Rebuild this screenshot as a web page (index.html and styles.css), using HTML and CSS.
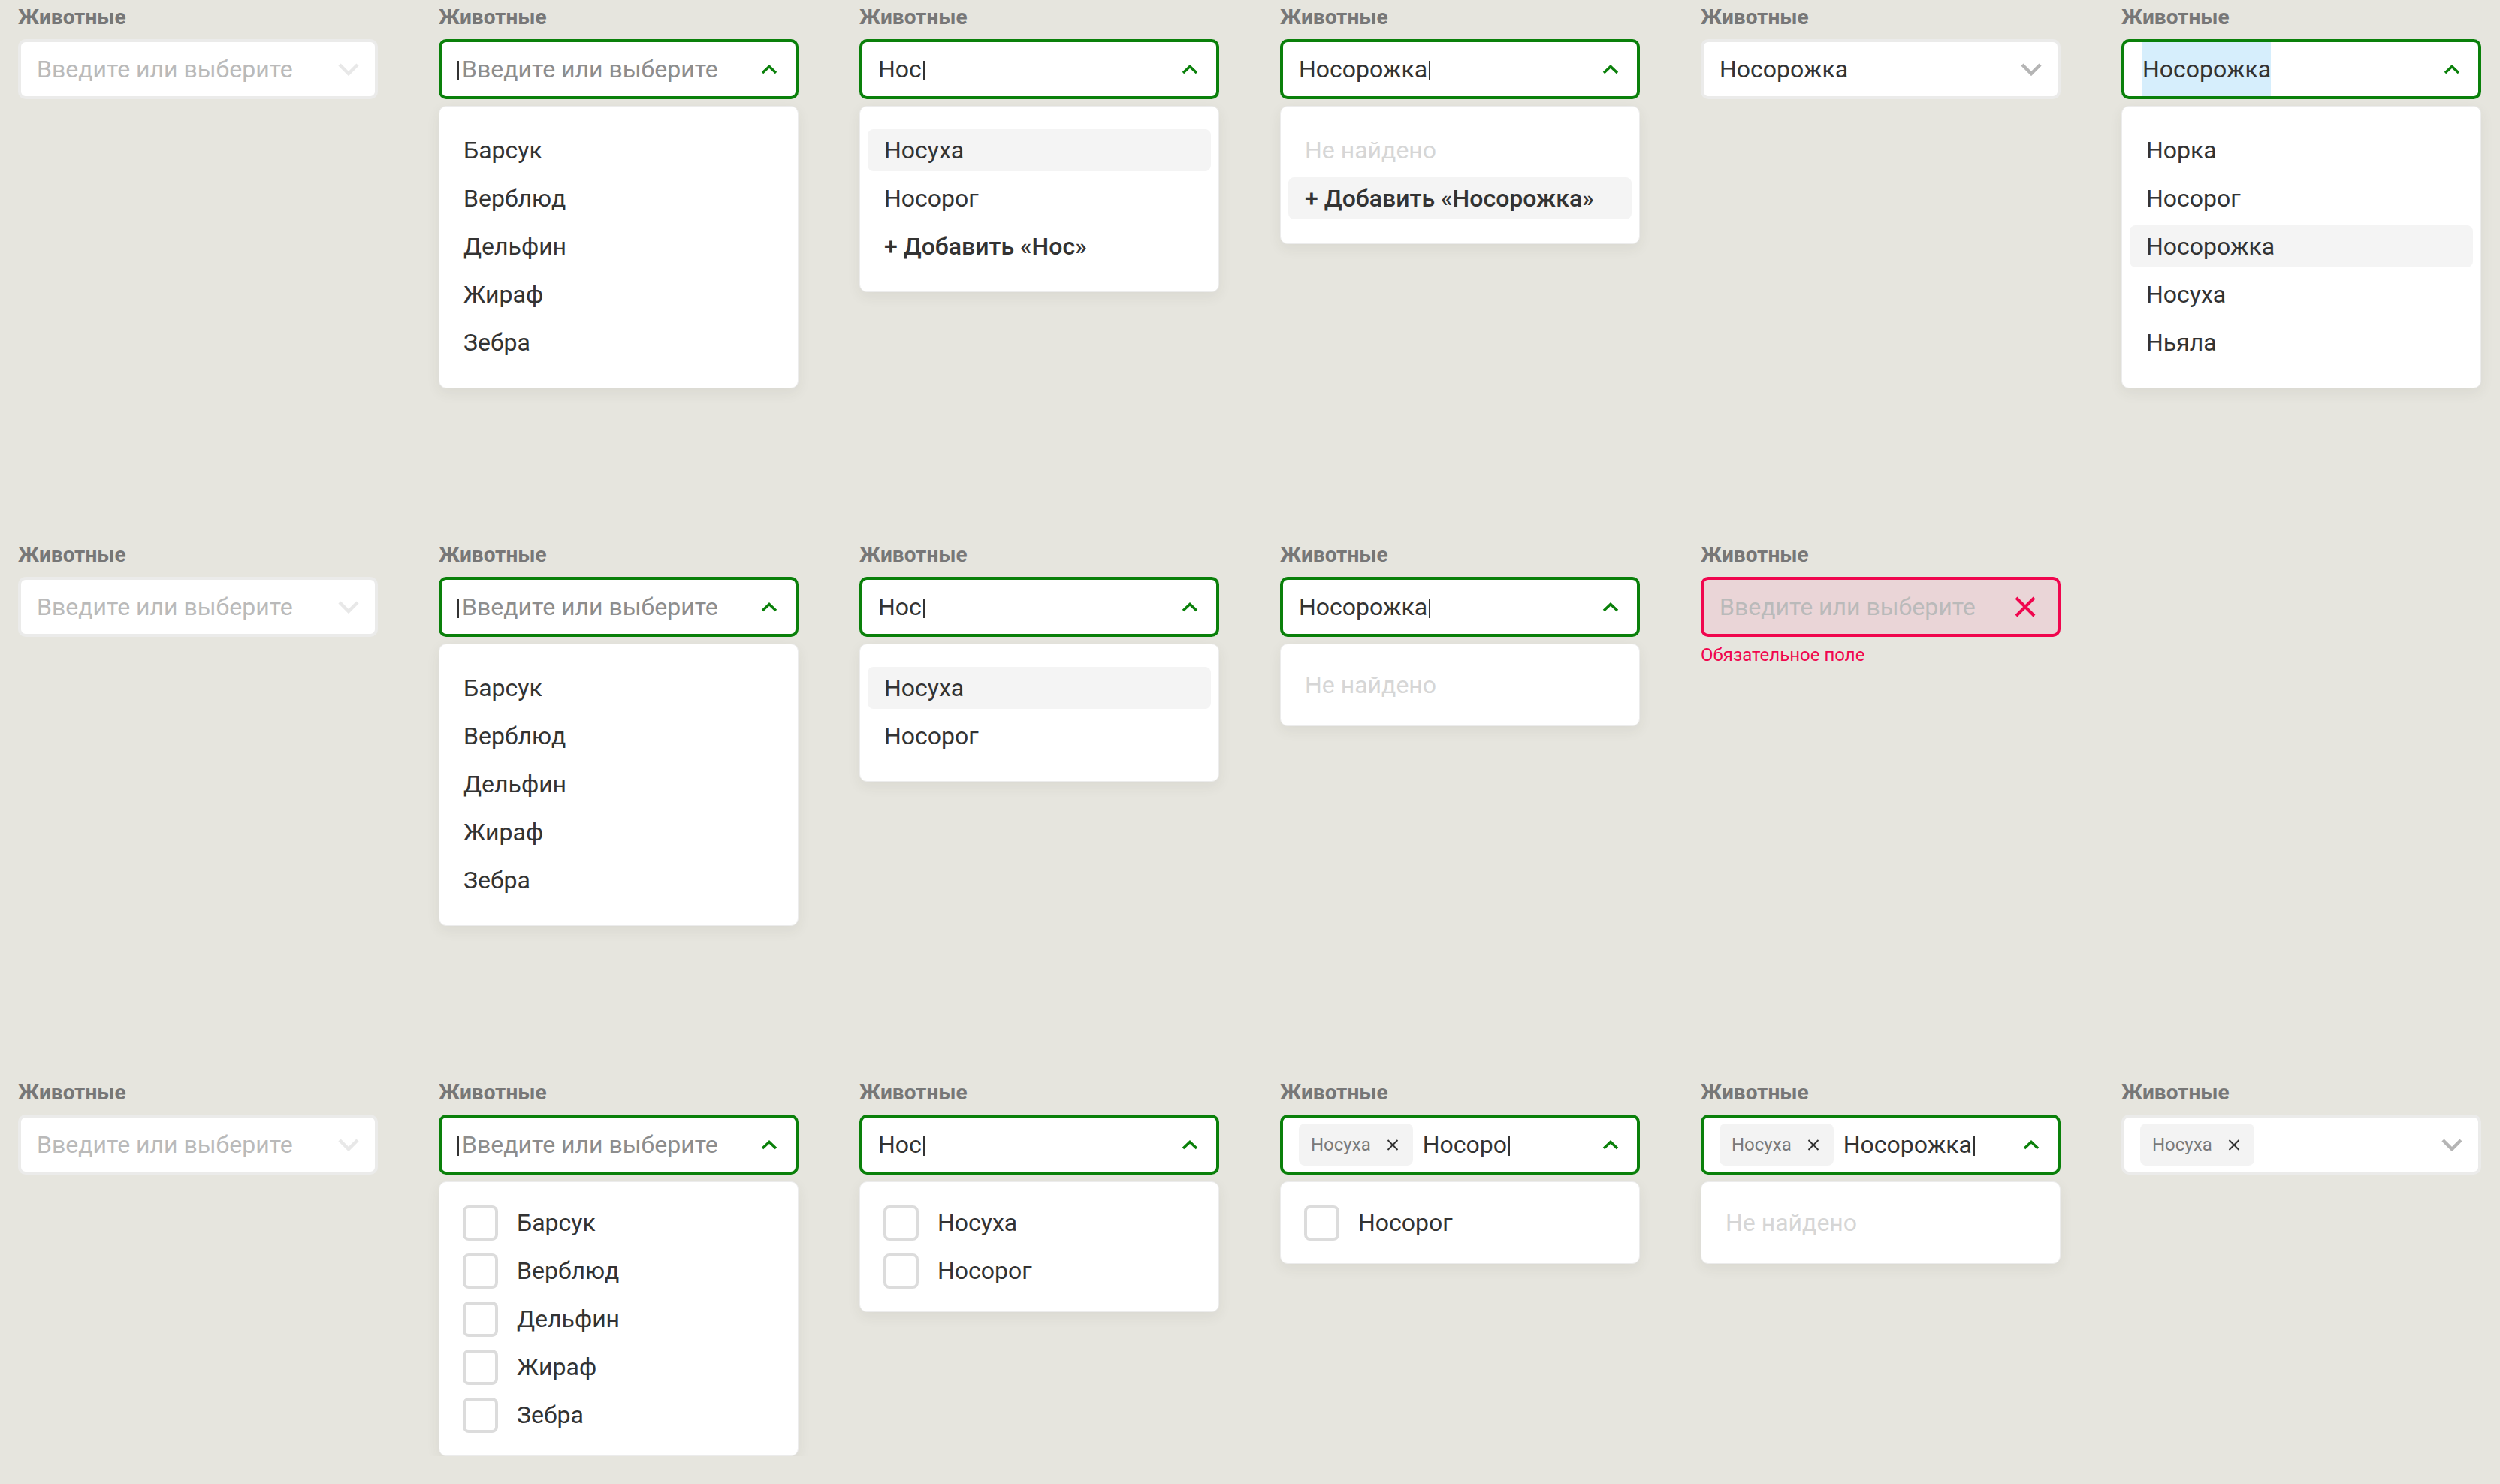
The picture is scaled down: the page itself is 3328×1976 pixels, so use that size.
FILE: index.html
```html
<!DOCTYPE HTML>
<html>
<head>
    <meta charset="utf-8">
    <title>Combobox states</title>
    <link rel="stylesheet" href="styles.css">
</head>
<body>
    <div class="board">

        <!-- single select with "add" option -->
        <div class="row">
            <div class="field">
                <div class="label">Животные</div>
                <div class="box">
                    <span class="entry placeholder">Введите или выберите</span>
                    <span class="toggle"><svg class="chev" width="28" height="17" viewBox="0 0 28 17"><path d="M2 2l12 12L26 2"/></svg></span>
                </div>
            </div>
            <div class="field">
                <div class="label">Животные</div>
                <div class="box is-open">
                    <span class="entry hint-text"><i class="caret first"></i>Введите или выберите</span>
                    <span class="toggle"><svg class="chev-up" width="22" height="13" viewBox="0 0 22 13"><path d="M2 11l9-8.5 9 8.5"/></svg></span>
                </div>
                <div class="menu">
                    <div class="opt">Барсук</div>
                    <div class="opt">Верблюд</div>
                    <div class="opt">Дельфин</div>
                    <div class="opt">Жираф</div>
                    <div class="opt">Зебра</div>
                </div>
            </div>
            <div class="field">
                <div class="label">Животные</div>
                <div class="box is-open">
                    <span class="entry">Нос<i class="caret"></i></span>
                    <span class="toggle"><svg class="chev-up" width="22" height="13" viewBox="0 0 22 13"><path d="M2 11l9-8.5 9 8.5"/></svg></span>
                </div>
                <div class="menu">
                    <div class="opt active">Носуха</div>
                    <div class="opt">Носорог</div>
                    <div class="opt add">+ Добавить «Нос»</div>
                </div>
            </div>
            <div class="field">
                <div class="label">Животные</div>
                <div class="box is-open">
                    <span class="entry">Носорожка<i class="caret"></i></span>
                    <span class="toggle"><svg class="chev-up" width="22" height="13" viewBox="0 0 22 13"><path d="M2 11l9-8.5 9 8.5"/></svg></span>
                </div>
                <div class="menu">
                    <div class="opt empty">Не найдено</div>
                    <div class="opt add active">+ Добавить «Носорожка»</div>
                </div>
            </div>
            <div class="field">
                <div class="label">Животные</div>
                <div class="box">
                    <span class="entry">Носорожка</span>
                    <span class="toggle filled"><svg class="chev" width="28" height="17" viewBox="0 0 28 17"><path d="M2 2l12 12L26 2"/></svg></span>
                </div>
            </div>
            <div class="field">
                <div class="label">Животные</div>
                <div class="box is-open">
                    <span class="selected">Носорожка</span>
                    <span class="toggle"><svg class="chev-up" width="22" height="13" viewBox="0 0 22 13"><path d="M2 11l9-8.5 9 8.5"/></svg></span>
                </div>
                <div class="menu">
                    <div class="opt">Норка</div>
                    <div class="opt">Носорог</div>
                    <div class="opt active">Носорожка</div>
                    <div class="opt">Носуха</div>
                    <div class="opt">Ньяла</div>
                </div>
            </div>
        </div>

        <!-- single select, strict list -->
        <div class="row">
            <div class="field">
                <div class="label">Животные</div>
                <div class="box">
                    <span class="entry placeholder">Введите или выберите</span>
                    <span class="toggle"><svg class="chev" width="28" height="17" viewBox="0 0 28 17"><path d="M2 2l12 12L26 2"/></svg></span>
                </div>
            </div>
            <div class="field">
                <div class="label">Животные</div>
                <div class="box is-open">
                    <span class="entry hint-text"><i class="caret first"></i>Введите или выберите</span>
                    <span class="toggle"><svg class="chev-up" width="22" height="13" viewBox="0 0 22 13"><path d="M2 11l9-8.5 9 8.5"/></svg></span>
                </div>
                <div class="menu">
                    <div class="opt">Барсук</div>
                    <div class="opt">Верблюд</div>
                    <div class="opt">Дельфин</div>
                    <div class="opt">Жираф</div>
                    <div class="opt">Зебра</div>
                </div>
            </div>
            <div class="field">
                <div class="label">Животные</div>
                <div class="box is-open">
                    <span class="entry">Нос<i class="caret"></i></span>
                    <span class="toggle"><svg class="chev-up" width="22" height="13" viewBox="0 0 22 13"><path d="M2 11l9-8.5 9 8.5"/></svg></span>
                </div>
                <div class="menu">
                    <div class="opt active">Носуха</div>
                    <div class="opt">Носорог</div>
                </div>
            </div>
            <div class="field">
                <div class="label">Животные</div>
                <div class="box is-open">
                    <span class="entry">Носорожка<i class="caret"></i></span>
                    <span class="toggle"><svg class="chev-up" width="22" height="13" viewBox="0 0 22 13"><path d="M2 11l9-8.5 9 8.5"/></svg></span>
                </div>
                <div class="menu short">
                    <div class="opt empty">Не найдено</div>
                </div>
            </div>
            <div class="field">
                <div class="label">Животные</div>
                <div class="box is-error">
                    <span class="entry placeholder">Введите или выберите</span>
                    <span class="toggle clear"><svg width="28" height="28" viewBox="0 0 28 28"><path d="M2 2l24 24M26 2L2 26"/></svg></span>
                </div>
                <div class="error">Обязательное поле</div>
            </div>
        </div>

        <!-- multi select with checkboxes -->
        <div class="row last">
            <div class="field">
                <div class="label">Животные</div>
                <div class="box">
                    <span class="entry placeholder">Введите или выберите</span>
                    <span class="toggle"><svg class="chev" width="28" height="17" viewBox="0 0 28 17"><path d="M2 2l12 12L26 2"/></svg></span>
                </div>
            </div>
            <div class="field">
                <div class="label">Животные</div>
                <div class="box is-open">
                    <span class="entry hint-text"><i class="caret first"></i>Введите или выберите</span>
                    <span class="toggle"><svg class="chev-up" width="22" height="13" viewBox="0 0 22 13"><path d="M2 11l9-8.5 9 8.5"/></svg></span>
                </div>
                <div class="menu checks">
                    <div class="opt"><span class="check"></span>Барсук</div>
                    <div class="opt"><span class="check"></span>Верблюд</div>
                    <div class="opt"><span class="check"></span>Дельфин</div>
                    <div class="opt"><span class="check"></span>Жираф</div>
                    <div class="opt"><span class="check"></span>Зебра</div>
                </div>
            </div>
            <div class="field">
                <div class="label">Животные</div>
                <div class="box is-open">
                    <span class="entry">Нос<i class="caret"></i></span>
                    <span class="toggle"><svg class="chev-up" width="22" height="13" viewBox="0 0 22 13"><path d="M2 11l9-8.5 9 8.5"/></svg></span>
                </div>
                <div class="menu checks">
                    <div class="opt"><span class="check"></span>Носуха</div>
                    <div class="opt"><span class="check"></span>Носорог</div>
                </div>
            </div>
            <div class="field">
                <div class="label">Животные</div>
                <div class="box is-open">
                    <span class="chip">Носуха<svg width="16" height="15" viewBox="0 0 16 15"><path d="M1.5 1l13 13M14.5 1l-13 13"/></svg></span>
                    <span class="entry">Носоро<i class="caret"></i></span>
                    <span class="toggle"><svg class="chev-up" width="22" height="13" viewBox="0 0 22 13"><path d="M2 11l9-8.5 9 8.5"/></svg></span>
                </div>
                <div class="menu checks">
                    <div class="opt"><span class="check"></span>Носорог</div>
                </div>
            </div>
            <div class="field">
                <div class="label">Животные</div>
                <div class="box is-open">
                    <span class="chip">Носуха<svg width="16" height="15" viewBox="0 0 16 15"><path d="M1.5 1l13 13M14.5 1l-13 13"/></svg></span>
                    <span class="entry">Носорожка<i class="caret"></i></span>
                    <span class="toggle"><svg class="chev-up" width="22" height="13" viewBox="0 0 22 13"><path d="M2 11l9-8.5 9 8.5"/></svg></span>
                </div>
                <div class="menu short">
                    <div class="opt empty">Не найдено</div>
                </div>
            </div>
            <div class="field">
                <div class="label">Животные</div>
                <div class="box">
                    <span class="chip">Носуха<svg width="16" height="15" viewBox="0 0 16 15"><path d="M1.5 1l13 13M14.5 1l-13 13"/></svg></span>
                    <span class="toggle filled"><svg class="chev" width="28" height="17" viewBox="0 0 28 17"><path d="M2 2l12 12L26 2"/></svg></span>
                </div>
            </div>
        </div>

    </div>
</body>
</html>
```

FILE: styles.css
```css
html{
    background-color: #e6e5de;
}
body{
    margin: 0px;
    font-family: Roboto, "Noto Sans", "Liberation Sans", sans-serif;
    color: #333333;
}
.board{
    padding: 7px 24px 0px;
}
.row{
    display: flex;
    align-items: flex-start;
    gap: 81px;
    height: 716px;
}
.row.last{
    height: auto;
}
.field{
    width: 479px;
    flex: none;
}
.label{
    font-size: 28px;
    font-weight: 700;
    line-height: 32px;
    color: #777777;
    margin-bottom: 13px;
}

/* the input itself */
.box{
    box-sizing: border-box;
    height: 80px;
    display: flex;
    align-items: center;
    padding: 0px 21px;
    background: #ffffff;
    border: 4px solid #ebebea;
    border-radius: 10px;
    font-size: 32px;
    white-space: nowrap;
}
.box.is-open{
    border-color: #0a800a;
}
.box.is-error{
    border-color: #f0064e;
    background: #ead5d7;
}
.entry{
    line-height: 36px;
    color: #333333;
}
.entry.placeholder{
    color: #bababa;
}
.entry.hint-text{
    color: #8d8d8d;
}
.caret{
    display: inline-block;
    width: 2px;
    height: 26px;
    background: #333333;
    vertical-align: -4px;
    margin-left: 2px;
}
.caret.first{
    margin-left: 0px;
    margin-right: 4px;
}
.selected{
    align-self: stretch;
    display: flex;
    align-items: center;
    margin-left: 3px;
    background: #d6eefc;
}
.toggle{
    margin-left: auto;
    width: 28px;
    display: flex;
    justify-content: center;
    color: #e8e8e8;
}
.toggle.filled{
    color: #b5b5b5;
}
.box.is-open .toggle{
    color: #0a800a;
}
.toggle.clear{
    color: #f0064e;
    margin-right: 8px;
}
.toggle svg{
    display: block;
    fill: none;
    stroke: currentColor;
}
.toggle .chev{
    stroke-width: 4.5;
}
.toggle .chev-up{
    stroke-width: 3.5;
}
.toggle.clear svg{
    stroke-width: 4;
}

/* selected value in multi mode */
.chip{
    display: flex;
    align-items: center;
    gap: 21px;
    height: 56px;
    padding: 0px 19px 0px 16px;
    margin-right: 13px;
    background: #f3f3f3;
    border-radius: 8px;
    font-size: 24px;
    color: #7a7a7a;
}
.chip svg{
    display: block;
    fill: none;
    stroke: #333333;
    stroke-width: 2;
}

/* dropdown list */
.menu{
    margin-top: 9px;
    display: flex;
    flex-direction: column;
    gap: 8px;
    padding: 30px 10px 32px;
    background: #ffffff;
    border: 1px solid #ececec;
    border-radius: 10px;
    box-shadow: 0px 6px 18px rgba(60, 60, 40, 0.07);
}
.menu.checks{
    gap: 16px;
    padding-bottom: 30px;
}
.menu.short{
    padding-bottom: 30px;
}
.opt{
    height: 56px;
    display: flex;
    align-items: center;
    padding-left: 22px;
    border-radius: 8px;
    font-size: 32px;
    color: #333333;
    white-space: nowrap;
}
.opt.active{
    background: #f4f4f4;
}
.opt.add{
    font-weight: 500;
}
.opt.empty{
    color: #d6d6d6;
}
.menu.short .opt,
.menu.checks .opt{
    height: 48px;
}
.menu.checks .opt{
    padding-left: 21px;
}
.check{
    box-sizing: border-box;
    width: 47px;
    height: 47px;
    margin-right: 25px;
    border: 4px solid #dcdcdc;
    border-radius: 8px;
}

.error{
    margin-top: 10px;
    font-size: 24px;
    color: #f0064e;
}
```
